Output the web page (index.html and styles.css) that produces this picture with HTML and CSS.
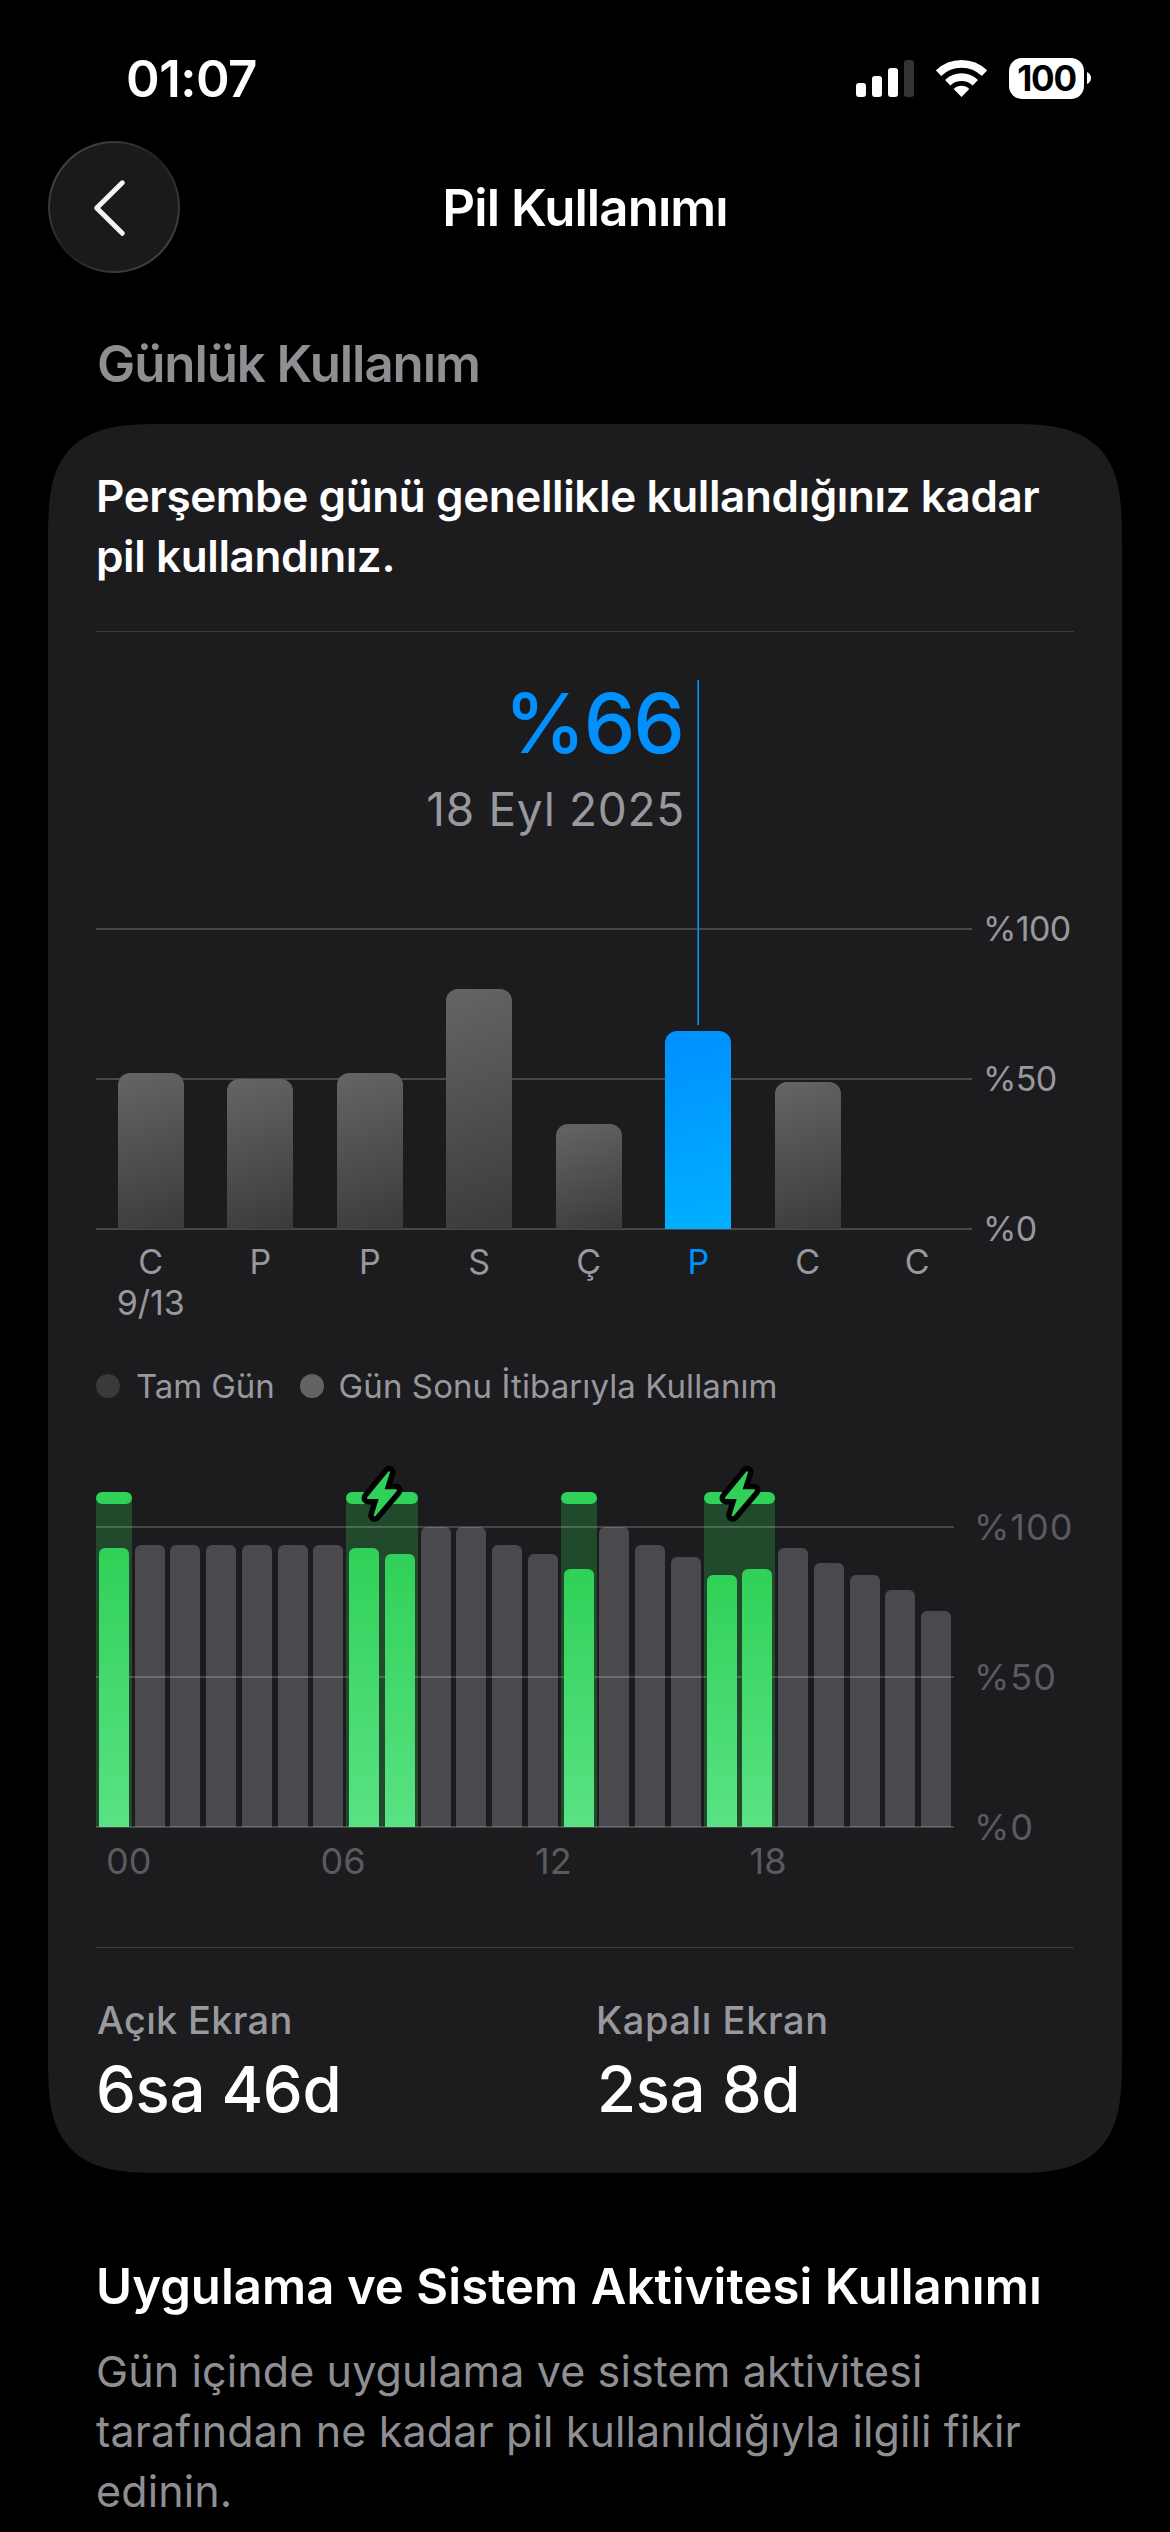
FILE: index.html
```html
<!DOCTYPE html>
<html lang="tr">
<head>
<meta charset="utf-8">
<title>Pil Kullanımı</title>
<link rel="stylesheet" href="styles.css">
</head>
<body>
<header class="status">
  <span class="clock">01:07</span>
  <div class="indicators">
    <div class="signal"><i class="s1"></i><i class="s2"></i><i class="s3"></i><i class="s4"></i></div>
    <svg class="wifi" viewBox="0 0 51 37">
      <path d="M2.5 13.2A33.1 33.1 0 0 1 48.5 13.2M11.7 22.7A19.9 19.9 0 0 1 39.3 22.7" fill="none" stroke="#fff" stroke-width="7.7"/>
      <path d="M25.5 37L17.7 28.9A11.2 11.2 0 0 1 33.3 28.9Z" fill="#fff"/>
    </svg>
    <div class="battery"><span class="level">100</span><svg class="nub" viewBox="0 0 4 12"><path d="M0 0Q4 2 4 6T0 12Z" fill="#fff"/></svg></div>
  </div>
</header>

<nav class="nav">
  <button class="back" aria-label="Geri"><svg viewBox="0 0 132 132"><path d="M74.3 41.8L48.7 67L74.3 92.3" fill="none" stroke="#f4f4f4" stroke-width="5" stroke-linecap="round" stroke-linejoin="round"/></svg></button>
  <h1 class="title">Pil Kullanımı</h1>
</nav>

<main>
  <h2 class="section-title">Günlük Kullanım</h2>
  <section class="card">
    <p class="message">Perşembe günü genellikle kullandığınız kadar pil kullandınız.</p>
    <hr class="rule">

    <div class="daily">
      <div class="callout">
        <strong class="callout-value">%66</strong>
        <span class="callout-date">18 Eyl 2025</span>
      </div>
      <div class="pointer"></div>
      <div class="row">
        <div class="plot daily-plot">
          <div class="lines"><i></i><i></i><i></i></div>
          <div class="layer">
            <div class="day" style="--v:52"></div>
            <div class="day" style="--v:50"></div>
            <div class="day" style="--v:52"></div>
            <div class="day" style="--v:80"></div>
            <div class="day" style="--v:35"></div>
            <div class="day selected" style="--v:66"></div>
            <div class="day" style="--v:49"></div>
          </div>
        </div>
        <div class="scale"><span>%100</span><span>%50</span><span>%0</span></div>
      </div>
      <div class="days">
        <span>C<br>9/13</span><span>P</span><span>P</span><span>S</span><span>Ç</span><span class="on">P</span><span>C</span><span>C</span>
      </div>
    </div>

    <div class="legend">
      <i class="dot full"></i><span>Tam Gün</span>
      <i class="dot end"></i><span class="legend-long">Gün Sonu İtibarıyla Kullanım</span>
    </div>

    <div class="hourly">
      <div class="row">
        <div class="plot hourly-plot">
          <div class="layer">
            <div class="charge" style="grid-column:1"></div>
            <div class="charge" style="grid-column:8/10"><svg class="bolt" viewBox="0 0 50 66"><use href="#bolt-shape"/></svg></div>
            <div class="charge" style="grid-column:14"></div>
            <div class="charge" style="grid-column:18/20"><svg class="bolt" viewBox="0 0 50 66"><use href="#bolt-shape"/></svg></div>
          </div>
          <div class="layer">
            <div class="hour green" style="--v:93"></div>
            <div class="hour" style="--v:94"></div>
            <div class="hour" style="--v:94"></div>
            <div class="hour" style="--v:94"></div>
            <div class="hour" style="--v:94"></div>
            <div class="hour" style="--v:94"></div>
            <div class="hour" style="--v:94"></div>
            <div class="hour green" style="--v:93"></div>
            <div class="hour green" style="--v:91"></div>
            <div class="hour" style="--v:100"></div>
            <div class="hour" style="--v:100"></div>
            <div class="hour" style="--v:94"></div>
            <div class="hour" style="--v:91"></div>
            <div class="hour green" style="--v:86"></div>
            <div class="hour" style="--v:100"></div>
            <div class="hour" style="--v:94"></div>
            <div class="hour" style="--v:90"></div>
            <div class="hour green" style="--v:84"></div>
            <div class="hour green" style="--v:86"></div>
            <div class="hour" style="--v:93"></div>
            <div class="hour" style="--v:88"></div>
            <div class="hour" style="--v:84"></div>
            <div class="hour" style="--v:79"></div>
            <div class="hour" style="--v:72"></div>
          </div>
          <div class="lines"><i></i><i></i><i></i></div>
        </div>
        <div class="scale hourly-scale"><span>%100</span><span>%50</span><span>%0</span></div>
      </div>
      <div class="hours"><span>00</span><span>06</span><span>12</span><span>18</span></div>
    </div>

    <hr class="rule">
    <dl class="stats">
      <div><dt>Açık Ekran</dt><dd>6sa 46d</dd></div>
      <div><dt class="wide">Kapalı Ekran</dt><dd>2sa 8d</dd></div>
    </dl>
  </section>

  <section class="activity">
    <h2 class="activity-title">Uygulama ve Sistem Aktivitesi Kullanımı</h2>
    <p class="activity-text">Gün içinde uygulama ve sistem aktivitesi tarafından ne kadar pil kullanıldığıyla ilgili fikir edinin.</p>
  </section>
</main>

<svg width="0" height="0" class="defs">
  <defs>
    <g id="bolt-shape" stroke-linejoin="round">
      <path d="M32 11.3L11 37H23L17.7 54.3L39 29.3H26.3Z" fill="#000" stroke="#000" stroke-width="13"/>
      <path d="M32 11.3L11 37H23L17.7 54.3L39 29.3H26.3Z" fill="#30d158" stroke="#30d158" stroke-width="2"/>
    </g>
  </defs>
</svg>
</body>
</html>
```
FILE: styles.css
```css
* { box-sizing: border-box; margin: 0; padding: 0; }
body {
  width: 1170px;
  height: 2532px;
  overflow: hidden;
  background: #000;
  color: #fff;
  font-family: Inter, "Liberation Sans", sans-serif;
  font-kerning: normal;
}
.defs { position: absolute; }

.status {
  display: flex;
  align-items: center;
  justify-content: space-between;
  height: 118px;
  padding: 38px 79px 0 126px;
}
.clock { font-size: 51px; font-weight: 600; letter-spacing: -0.5px; }
.indicators { display: flex; align-items: center; gap: 22px; }
.signal { display: flex; align-items: flex-end; gap: 6px; height: 37px; }
.signal i { width: 10px; border-radius: 3px; background: #fff; }
.signal .s1 { height: 14px; }
.signal .s2 { height: 21px; }
.signal .s3 { height: 29px; }
.signal .s4 { height: 37px; background: #333; }
.wifi { width: 51px; height: 37px; }
.battery { display: flex; align-items: center; gap: 3px; }
.level {
  width: 75px;
  height: 41px;
  border-radius: 13px;
  background: #fff;
  color: #000;
  font-size: 35px;
  font-weight: 700;
  line-height: 41px;
  letter-spacing: -1.2px;
  text-align: center;
}
.nub { width: 4px; height: 12px; }

.nav {
  display: grid;
  grid-template-columns: 132px 1fr 132px;
  align-items: center;
  padding: 23px 48px 0;
}
.back {
  width: 132px;
  height: 132px;
  border: 2px solid transparent;
  border-radius: 50%;
  background:
    linear-gradient(#1a1a1a, #1a1a1a) padding-box,
    linear-gradient(135deg, #444 10%, #353535 30%, #202020 50%, #353535 70%, #444 90%) border-box;
}
.back svg { display: block; width: 132px; height: 132px; margin: -2px; }
.title { font-size: 51px; font-weight: 600; letter-spacing: -0.94px; text-align: center; }

.section-title {
  margin: 60px 96px 30px 97px;
  color: #8e8e93;
  font-size: 51px;
  font-weight: 600;
  line-height: 61px;
  letter-spacing: -1.07px;
}
.card {
  margin: 0 48px;
  padding: 42px 48px 47px;
  border-radius: 119px;
  corner-shape: superellipse(1.65);
  background: #1c1c1e;
}
.message { margin-right: -20px; font-size: 44px; font-weight: 600; line-height: 60px; letter-spacing: -0.38px; }
.rule { height: 1px; border: 0; background: #3a3a3c; }
.message + .rule { margin-top: 45px; }

.row { display: flex; }
.plot { display: grid; align-items: end; }
.plot > * { grid-area: 1 / 1; }
.layer { display: grid; align-items: end; }
.lines {
  display: flex;
  flex-direction: column;
  justify-content: space-between;
  height: 302px;
}
.lines i { height: 2px; background: #48484a; }
.scale {
  display: flex;
  flex-direction: column;
  justify-content: space-between;
  margin: -19px 0 -19px 11px;
  color: #98989f;
  font-size: 34px;
  line-height: 40px;
  letter-spacing: -0.6px;
}

.daily { position: relative; margin-top: 48px; }
.callout {
  display: flex;
  flex-direction: column;
  align-items: flex-end;
  width: 602px;
  height: 248px;
  padding-right: 13px;
}
.callout-value {
  margin: -6px 2px 0 0;
  color: #0091ff;
  font-size: 82px;
  font-weight: 500;
  line-height: 100px;
  letter-spacing: -2px;
}
.callout-date { margin-top: 5px; color: #98989f; font-size: 46px; line-height: 60px; letter-spacing: 0.7px; }
.pointer {
  position: absolute;
  z-index: 2;
  top: 0;
  left: 601px;
  width: 2px;
  height: 345px;
  background: linear-gradient(90deg, #0c66ac 50%, #0091ff 50%);
}
.daily-plot { width: 876px; height: 302px; }
.daily-plot .layer { grid-template-columns: repeat(8, 1fr); }
.day {
  z-index: 1;
  justify-self: center;
  width: 66px;
  height: calc(var(--v) * 3px);
  margin-bottom: 1px;
  border-radius: 12px 12px 0 0;
  background: linear-gradient(160deg, #656568, #3a3a3c);
}
.day.selected { background: linear-gradient(165deg, #0091ff 5%, #00b0ff); }
.days {
  display: grid;
  grid-template-columns: repeat(8, 1fr);
  width: 876px;
  margin-top: 11px;
  color: #98989f;
  font-size: 34px;
  line-height: 41px;
  text-align: center;
}
.days .on { color: #0091ff; }

.legend {
  display: flex;
  align-items: center;
  margin-top: 43px;
  color: #98989f;
  font-size: 33px;
  line-height: 40px;
  letter-spacing: -0.1px;
}
.dot { width: 24px; height: 24px; margin-right: 16px; border-radius: 50%; }
.dot.full { background: #3a3a3c; }
.dot.end { margin-left: 25px; background: #636366; }
.legend-long { margin-left: -1px; letter-spacing: 0.1px; }

.hourly { margin-top: 86px; }
.hourly-plot { width: 858px; height: 336px; }
.hourly-plot .layer { grid-template-columns: repeat(24, 1fr); }
.hourly-plot .lines { z-index: 2; }
.hourly-plot .lines i { background: rgba(255, 255, 255, 0.19); }
.charge {
  position: relative;
  height: 335px;
  margin-bottom: 1px;
  background: linear-gradient(transparent 6px, #21492b 6px);
}
.charge::before {
  content: "";
  display: block;
  height: 12px;
  border-radius: 6px;
  background: #30d158;
}
.bolt { position: absolute; top: -31px; left: calc(50% - 25px); width: 50px; height: 66px; }
.hour {
  z-index: 1;
  justify-self: center;
  width: 30px;
  height: calc(var(--v) * 3px);
  margin-bottom: 1px;
  border-radius: 6px 6px 0 0;
  background: #4a494e;
}
.hour.green { z-index: 3; background: linear-gradient(#30d158, #5ae284); }
.hourly-scale {
  margin: 15px 0 -19px 20px;
  color: #5b5a60;
  font-size: 36px;
  letter-spacing: 1px;
}
.hours {
  display: grid;
  grid-template-columns: repeat(4, 1fr);
  width: 858px;
  margin-top: 13px;
  color: #5b5a60;
  font-size: 36px;
  line-height: 40px;
  text-indent: 10px;
}
.hourly + .rule { margin-top: 66px; }

.stats { display: grid; grid-template-columns: 501px 1fr; margin-top: 49px; }
.stats dt { margin-left: 1px; color: #98989f; font-size: 38px; font-weight: 450; line-height: 46px; letter-spacing: 0.3px; }
.stats dt.wide { margin-left: -1px; letter-spacing: 0.6px; }
.stats dd { margin-top: 7px; font-size: 63.5px; font-weight: 500; line-height: 77px; letter-spacing: -0.4px; }
.stats { margin-bottom: -1px; }

.activity { padding: 84px 96px 0; }
.activity-title { font-size: 49px; font-weight: 600; line-height: 60px; letter-spacing: 0.08px; white-space: nowrap; }
.activity-text { margin-top: 24px; color: #8e8e93; font-size: 43px; line-height: 60px; letter-spacing: 0.12px; }
```
